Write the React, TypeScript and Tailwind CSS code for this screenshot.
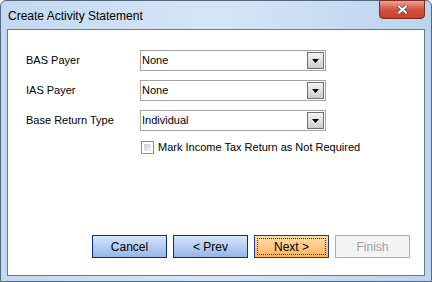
import React from 'react';

const font = { fontFamily: '"Liberation Sans", Arial, sans-serif' };

function ComboBox({ value }: { value: string }) {
  return (
    <div className="w-[186px] h-[21px] border border-[#a5a5a5] bg-white flex items-center justify-between pl-[1px] pr-[1px]">
      <span className="text-[11px] text-black leading-none">{value}</span>
      <div className="w-[17px] h-[17px] border border-[#6f6f6f] bg-linear-to-b from-[#f4f4f4] to-[#cdcdcd] flex items-center justify-center">
        <svg width="7" height="4" viewBox="0 0 7 4">
          <path d="M0 0 H7 L3.5 4 Z" fill="#000" />
        </svg>
      </div>
    </div>
  );
}

function FieldRow({ label, value, first }: { label: string; value: string; first?: boolean }) {
  return (
    <div className={`flex items-center h-[21px] ${first ? '' : 'mt-[9px]'}`}>
      <div className="w-[132px] pl-[18px] text-[11px] text-black">{label}</div>
      <ComboBox value={value} />
    </div>
  );
}

function WizardButton({
  children,
  variant = 'normal',
}: {
  children: React.ReactNode;
  variant?: 'normal' | 'focused' | 'disabled';
}) {
  if (variant === 'disabled') {
    return (
      <div className="w-[75px] h-[23px] border border-[#adadad] bg-[#f4f4f4] flex items-center justify-center text-[12px] text-[#a0a0a0]">
        {children}
      </div>
    );
  }
  if (variant === 'focused') {
    return (
      <div className="w-[75px] h-[23px] border border-[#1b3a8c] bg-linear-to-b from-[#ffdcaa] to-[#ffb65e] p-[2px]">
        <div className="w-full h-full border border-dotted border-[#333] flex items-center justify-center text-[12px] text-black">
          {children}
        </div>
      </div>
    );
  }
  return (
    <div className="w-[75px] h-[23px] border border-[#0b2c86] bg-linear-to-b from-[#d5e5fb] to-[#95b6e8] flex items-center justify-center text-[12px] text-black">
      {children}
    </div>
  );
}

export default function App() {
  return (
    <div
      className="w-[432px] h-[282px] border border-[#55677c] rounded-t-[6px] bg-linear-to-r from-[#c3d9f2] via-[#d5e5f7] to-[#bcd4ef] flex flex-col"
      style={font}
    >
      <div className="h-[28px] flex items-start justify-between pl-[7px] pr-[6px]">
        <span className="mt-[6px] text-[12px] text-black">Create Activity Statement</span>
        <div className="-mt-px w-[46px] h-[19px] rounded-b-[4px] border border-[#7e2a1e] bg-linear-to-b from-[#e9a595] via-[#d2533d] to-[#c4422e] flex items-center justify-center">
          <svg width="11" height="9" viewBox="0 0 11 9">
            <path d="M2 1.5 L9 7.5 M9 1.5 L2 7.5" stroke="#555" strokeWidth="3.6" strokeLinecap="square" />
            <path d="M2 1.5 L9 7.5 M9 1.5 L2 7.5" stroke="#fff" strokeWidth="2" strokeLinecap="square" />
          </svg>
        </div>
      </div>

      <div className="mx-[6px] h-[247px] border border-[#6a7888] bg-white flex flex-col pt-[20px] pb-[17px]">
        <FieldRow label="BAS Payer" value="None" first />
        <FieldRow label="IAS Payer" value="None" />
        <FieldRow label="Base Return Type" value="Individual" />

        <div className="flex items-center mt-[9px] ml-[133px] h-[15px]">
          <div className="w-[13px] h-[13px] border border-[#8e8f8f] bg-white p-[2px]">
            <div className="w-full h-full bg-linear-to-br from-[#cbcfd5] to-[#f4f4f4]" />
          </div>
          <span className="ml-[4px] text-[11px] text-black">Mark Income Tax Return as Not Required</span>
        </div>

        <div className="flex-1" />

        <div className="flex justify-end gap-[6px] pr-[14px]">
          <WizardButton>Cancel</WizardButton>
          <WizardButton>&lt; Prev</WizardButton>
          <WizardButton variant="focused">Next &gt;</WizardButton>
          <WizardButton variant="disabled">Finish</WizardButton>
        </div>
      </div>
    </div>
  );
}
